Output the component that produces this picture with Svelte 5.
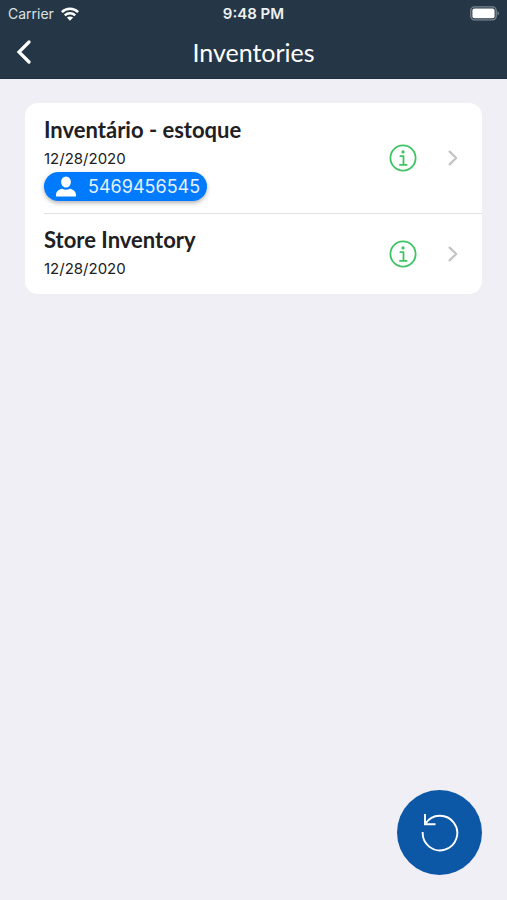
<script>
  const inventories = [
    { name: 'Inventário - estoque', date: '12/28/2020', owner: '5469456545' },
    { name: 'Store Inventory', date: '12/28/2020' }
  ];
</script>

<div class="screen">
  <header>
    <div class="status">
      <div class="carrier">
        <span>Carrier</span>
        <svg width="18" height="14" viewBox="0 0 18 14" aria-hidden="true">
          <g fill="none" stroke="#fff" stroke-width="2.5">
            <path d="M.9 5.2C5.4.7 12.6.7 17.1 5.2" />
            <path d="M3.8 8.3c2.9-2.8 7.5-2.8 10.4 0" />
          </g>
          <path d="M9 13.7 5.9 10.6c1.7-1.6 4.5-1.6 6.2 0z" fill="#fff" />
        </svg>
      </div>
      <time>9:48 PM</time>
      <svg class="battery" width="29" height="15" viewBox="0 0 29 15" aria-hidden="true">
        <rect x=".8" y=".8" width="25.4" height="13" rx="3.8" fill="none" stroke="#7b8790" stroke-width="1.3" />
        <rect x="2.4" y="2.4" width="22.2" height="9.8" rx="2" fill="#fff" />
        <path d="M27.5 5.2c2 .8 2 3.400 0 4.200z" fill="#7b8790" />
      </svg>
    </div>
    <nav>
      <button class="back" aria-label="Back">
        <svg width="16" height="24" viewBox="0 0 16 24" aria-hidden="true">
          <path d="M13 2 3 12l10 10" fill="none" stroke="#fff" stroke-width="3.2" stroke-linecap="round" stroke-linejoin="miter" />
        </svg>
      </button>
      <h1>Inventories</h1>
    </nav>
  </header>

  <main>
    <ul>
      {#each inventories as item}
        <li>
          <div class="details">
            <h2>{item.name}</h2>
            <p>{item.date}</p>
            {#if item.owner}
              <div class="badge">
                <svg width="20" height="21" viewBox="0 0 20 21" aria-hidden="true">
                  <ellipse cx="10" cy="6" rx="4.9" ry="5.600" fill="#fff" />
                  <path d="M0 20.6v-1.800c0-3.600 3-5.200 6.100-6 2.300 1.400 5.500 1.400 7.800 0 3.100.800 6.100 2.400 6.100 6v1.800z" fill="#fff" />
                </svg>
                <span>{item.owner}</span>
              </div>
            {/if}
          </div>
          <button class="info" aria-label="Information about {item.name}">
            <svg width="28" height="28" viewBox="0 0 28 28" aria-hidden="true">
              <g fill="none" stroke="#3fc463" stroke-width="1.8">
                <circle cx="14" cy="14" r="12.6" />
                <path d="M11.300 12.100h3.200v8.600M10.900 20.800h6.800" stroke-linecap="round" stroke-linejoin="round" />
              </g>
              <circle cx="14" cy="7.900" r="1.600" fill="#3fc463" />
            </svg>
          </button>
          <button class="open" aria-label="Open {item.name}">
            <svg width="10" height="16" viewBox="0 0 10 16" aria-hidden="true">
              <path d="m1.600 1.600 6.600 6.400-6.600 6.400" fill="none" stroke="#c3c3c6" stroke-width="2.200" stroke-linecap="round" stroke-linejoin="round" />
            </svg>
          </button>
        </li>
      {/each}
    </ul>
  </main>

  <button class="refresh" aria-label="Refresh">
    <svg width="40" height="40" viewBox="0 0 40 40" aria-hidden="true">
      <g fill="none" stroke="#fff" stroke-width="1.900">
        <path d="M2.700 19A17.300 17.300 0 1 0 5.500 10.600" />
        <path d="M5 1v10.300h10.500" />
      </g>
    </svg>
  </button>
</div>

<style>
  :global(body) {
    margin: 0;
    background: #f0eff5;
  }
  .screen {
    min-height: 100vh;
    background: #f0eff5;
    color: #202022;
    font-family: Inter, 'Liberation Sans', sans-serif;
  }
  button {
    display: flex;
    align-items: center;
    justify-content: center;
    padding: 0;
    border: 0;
    background: none;
    cursor: pointer;
  }
  svg {
    display: block;
    flex: none;
  }
  header {
    box-sizing: border-box;
    height: 79px;
    background: #253746;
    color: #fff;
    border-bottom: 1px solid #1b303f;
  }
  .status {
    display: grid;
    grid-template-columns: 1fr auto 1fr;
    align-items: center;
    height: 27px;
    padding: 0 8px;
    font-size: 14px;
  }
  .carrier {
    display: flex;
    align-items: center;
    gap: 7px;
    color: #dce1e5;
  }
  time {
    font-size: 15px;
    font-weight: 600;
    color: #eef1f3;
  }
  .battery {
    justify-self: end;
  }
  nav {
    display: grid;
    grid-template-columns: 48px 1fr 48px;
    align-items: center;
    height: 50px;
  }
  .back {
    height: 48px;
  }
  h1 {
    margin: 0;
    font: 400 25px/32px Lato, sans-serif;
    text-align: center;
  }
  main {
    padding: 24px 25px;
  }
  ul {
    margin: 0;
    padding: 0;
    list-style: none;
    background: #fff;
    border-radius: 13px;
  }
  li {
    position: relative;
    display: flex;
    align-items: center;
    padding: 12px 17px 12px 19px;
  }
  li + li::before {
    content: '';
    position: absolute;
    top: 0;
    left: 19px;
    right: 0;
    height: 1px;
    background: #e1e1e4;
  }
  .details {
    flex: 1;
    min-width: 0;
  }
  h2 {
    margin: 0;
    font: 700 22px/30px Lato, sans-serif;
  }
  p {
    margin: 0;
    font-size: 15px;
    line-height: 27px;
  }
  .badge {
    display: flex;
    align-items: center;
    gap: 12px;
    width: fit-content;
    height: 29px;
    padding: 0 7px 0 12px;
    border-radius: 15px;
    background: #007aff;
    box-shadow: 0 2px 4px #0000004d;
    color: #e5f1ff;
    font-size: 18px;
  }
  .info {
    width: 28px;
    height: 44px;
    margin-right: 24px;
  }
  .open {
    width: 24px;
    height: 44px;
  }
  .refresh {
    position: fixed;
    right: 25px;
    bottom: 25px;
    width: 85px;
    height: 85px;
    border-radius: 50%;
    background: #0d57a7;
  }
</style>
